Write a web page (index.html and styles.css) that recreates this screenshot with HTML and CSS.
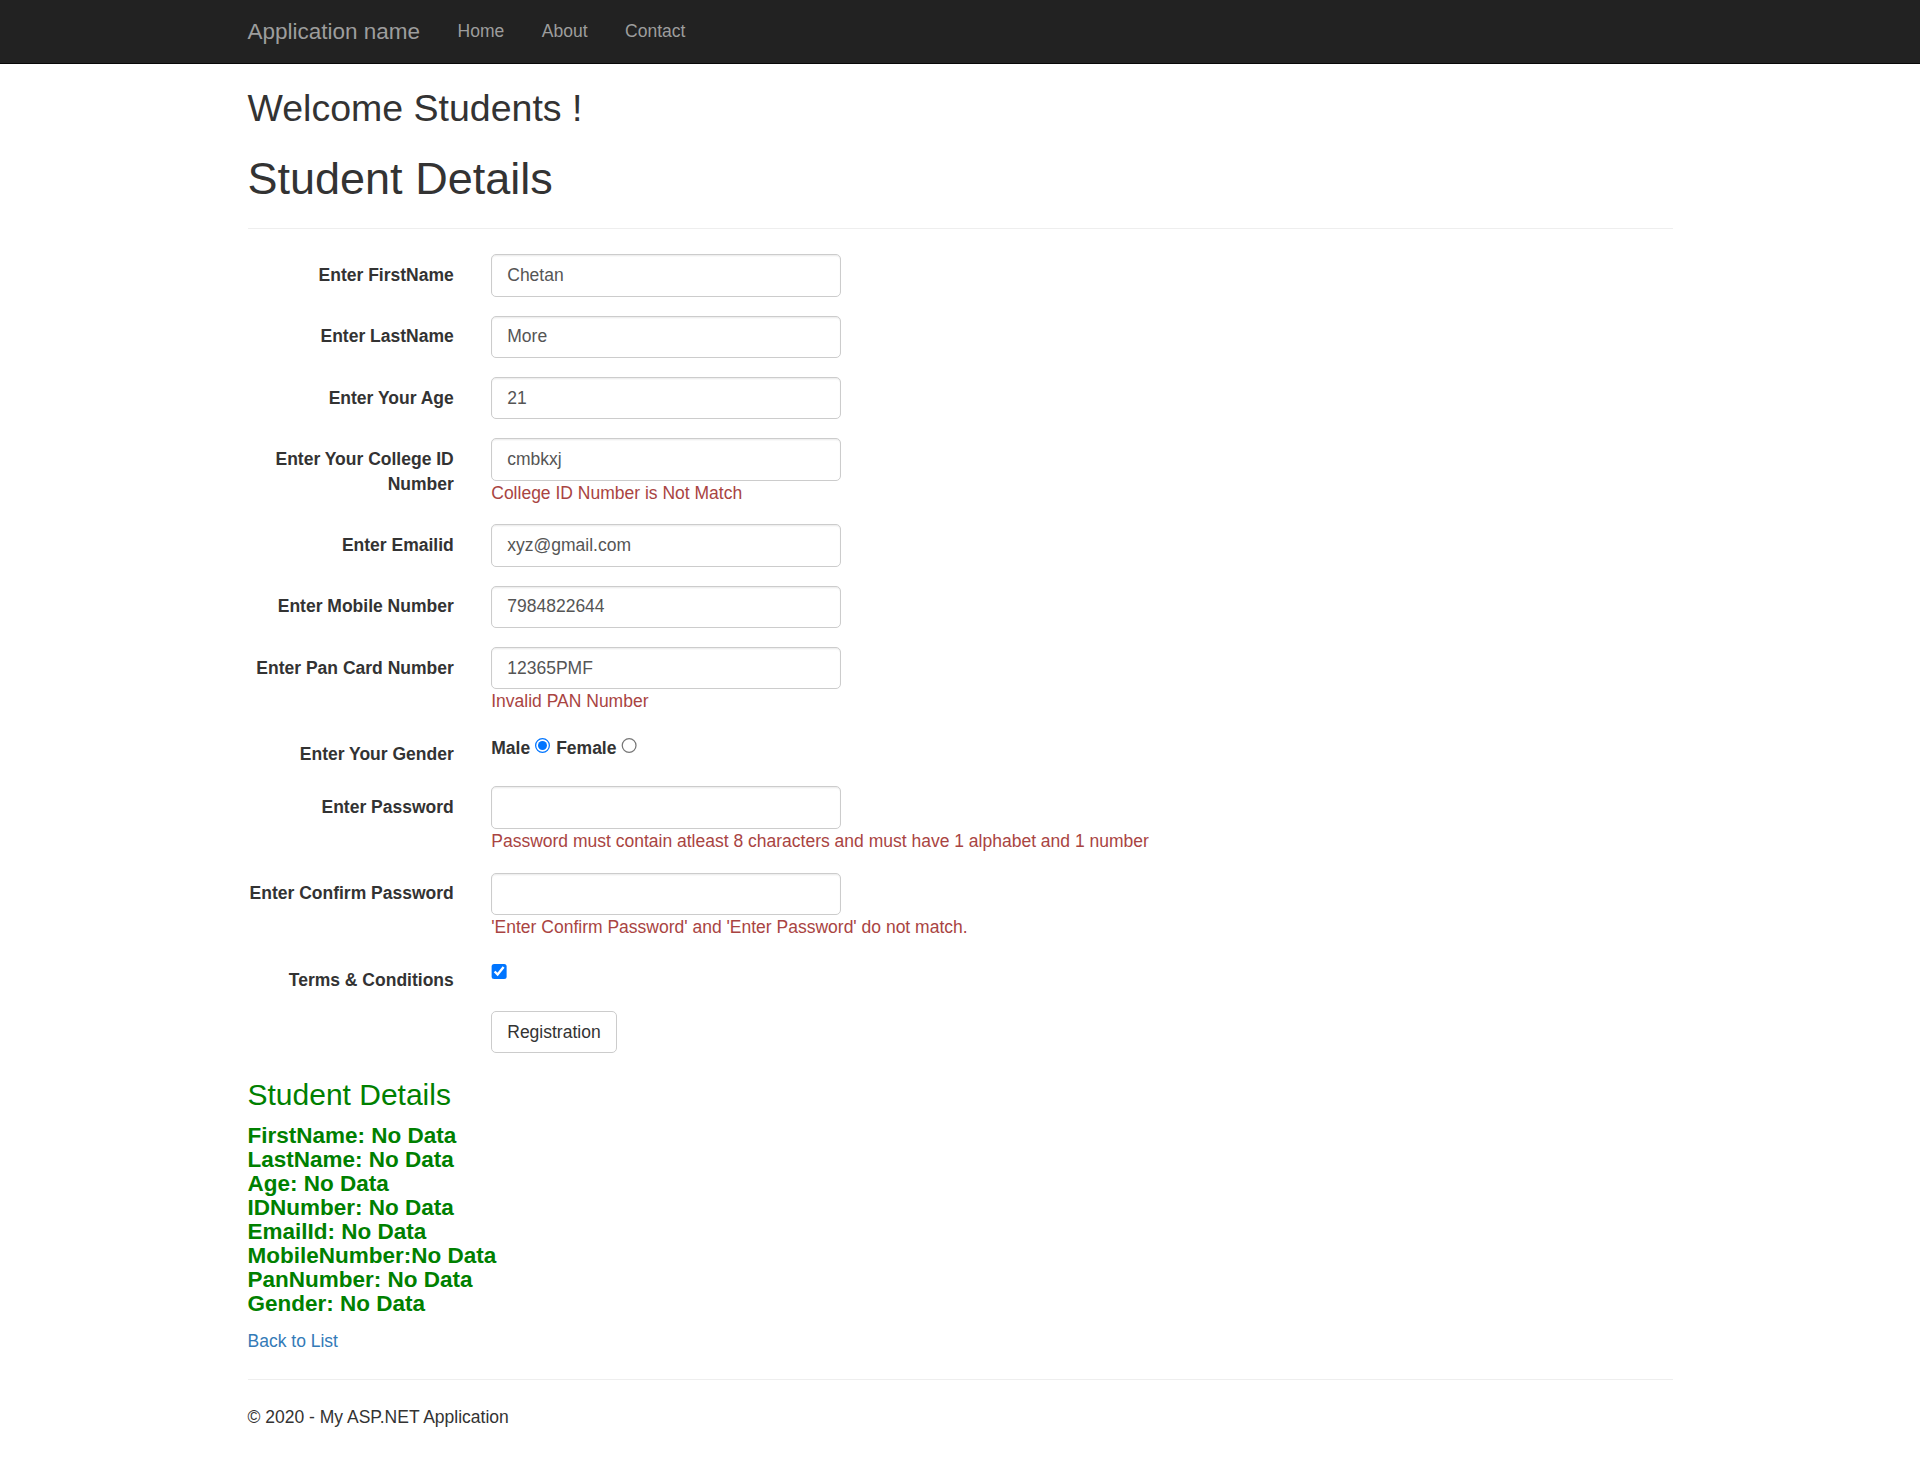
FILE: index.html
```html
<!DOCTYPE html>
<html lang="en">
<head>
<meta charset="utf-8">
<title>Student Details</title>
<link rel="stylesheet" href="styles.css">
</head>
<body>
<div class="navbar">
  <div class="container nav-inner">
    <a class="navbar-brand" href="#">Application name</a>
    <ul class="navbar-nav">
      <li><a href="#">Home</a></li>
      <li><a href="#">About</a></li>
      <li><a href="#">Contact</a></li>
    </ul>
  </div>
</div>
<div class="container body-content">
  <h2 class="welcome">Welcome Students !</h2>
  <div class="form-horizontal">
    <h1 class="page-title">Student Details</h1>
    <hr class="divider">
    <div class="form-group">
      <label class="control-label">Enter FirstName</label>
      <div class="field"><input class="form-control" type="text" value="Chetan"></div>
    </div>
    <div class="form-group">
      <label class="control-label">Enter LastName</label>
      <div class="field"><input class="form-control" type="text" value="More"></div>
    </div>
    <div class="form-group">
      <label class="control-label">Enter Your Age</label>
      <div class="field"><input class="form-control" type="text" value="21"></div>
    </div>
    <div class="form-group">
      <label class="control-label">Enter Your College ID Number</label>
      <div class="field"><input class="form-control" type="text" value="cmbkxj"><div class="text-danger">College ID Number is Not Match</div></div>
    </div>
    <div class="form-group">
      <label class="control-label">Enter Emailid</label>
      <div class="field"><input class="form-control" type="text" value="xyz@gmail.com"></div>
    </div>
    <div class="form-group">
      <label class="control-label">Enter Mobile Number</label>
      <div class="field"><input class="form-control" type="text" value="7984822644"></div>
    </div>
    <div class="form-group">
      <label class="control-label">Enter Pan Card Number</label>
      <div class="field"><input class="form-control" type="text" value="12365PMF"><div class="text-danger">Invalid PAN Number</div></div>
    </div>
    <div class="form-group">
      <label class="control-label">Enter Your Gender</label>
      <div class="field"><label class="inline-label">Male</label> <input class="choice" type="radio" name="gender" checked> <label class="inline-label">Female</label> <input class="choice" type="radio" name="gender"></div>
    </div>
    <div class="form-group">
      <label class="control-label">Enter Password</label>
      <div class="field"><input class="form-control" type="password" value=""><div class="text-danger">Password must contain atleast 8 characters and must have 1 alphabet and 1 number</div></div>
    </div>
    <div class="form-group">
      <label class="control-label">Enter Confirm Password</label>
      <div class="field"><input class="form-control" type="password" value=""><div class="text-danger">'Enter Confirm Password' and 'Enter Password' do not match.</div></div>
    </div>
    <div class="form-group">
      <label class="control-label">Terms &amp; Conditions</label>
      <div class="field"><input class="choice" type="checkbox" checked></div>
    </div>
    <div class="form-group">
      <div class="spacer"></div>
      <div class="field"><button class="btn" type="button">Registration</button></div>
    </div>
  </div>
  <h3 class="green-title">Student Details</h3>
  <h4 class="green-details">FirstName: No Data<br>LastName: No Data<br>Age: No Data<br>IDNumber: No Data<br>EmailId: No Data<br>MobileNumber:No Data<br>PanNumber: No Data<br>Gender: No Data</h4>
  <p class="back"><a href="#">Back to List</a></p>
  <hr class="divider">
  <footer class="footer"><p>&copy; 2020 - My ASP.NET Application</p></footer>
</div>
</body>
</html>
```

FILE: styles.css
```css
html {
  zoom: 1.25;
}
* {
  box-sizing: border-box;
}
body {
  margin: 0;
  padding-bottom: 20px;
  background: #fff;
  color: #333;
  font-family: "Liberation Sans", Arial, Helvetica, sans-serif;
  font-size: 14px;
  line-height: 1.42857143;
}
a {
  color: #337ab7;
  text-decoration: none;
}
.container {
  width: 1170px;
  margin: 0 auto;
  padding: 0 15px;
}
.navbar {
  background: #222;
  border-bottom: 1px solid #080808;
  height: 51px;
  margin-bottom: -1px;
  position: relative;
}
.nav-inner {
  display: flex;
  align-items: flex-start;
}
.navbar-brand {
  display: block;
  margin-left: -15px;
  padding: 15px;
  height: 50px;
  font-size: 18px;
  line-height: 20px;
  color: #9d9d9d;
}
.navbar-nav {
  display: flex;
  list-style: none;
  margin: 0;
  padding: 0;
}
.navbar-nav a {
  display: block;
  padding: 15px;
  line-height: 20px;
  color: #9d9d9d;
}
.welcome {
  font-size: 30px;
  font-weight: 500;
  line-height: 1.1;
  margin: 20px 0 10px;
}
.page-title {
  font-size: 36px;
  font-weight: 500;
  line-height: 1.1;
  margin: 20px 0 10px;
}
.divider {
  height: 0;
  margin: 20px 0;
  border: 0;
  border-top: 1px solid #eee;
}
.form-group {
  display: grid;
  grid-template-columns: 16.66666667% 83.33333333%;
  margin: 0 -15px 15px;
}
.control-label {
  padding: 7px 15px 0;
  text-align: right;
  font-weight: 700;
  margin: 0;
}
.spacer {
  min-height: 1px;
}
.field {
  padding: 0 15px;
  min-height: 1px;
}
.form-control {
  display: block;
  width: 100%;
  max-width: 280px;
  height: 34px;
  padding: 6px 12px;
  font-family: inherit;
  font-size: 14px;
  line-height: 1.42857143;
  color: #555;
  background: #fff;
  border: 1px solid #ccc;
  border-radius: 4px;
  box-shadow: inset 0 1px 1px rgba(0, 0, 0, .075);
  margin: 0;
}
.text-danger {
  color: #a94442;
}
.inline-label {
  display: inline-block;
  margin-bottom: 5px;
  font-weight: 700;
}
.choice {
  margin: 4px 0 0;
  line-height: normal;
}
.btn {
  display: inline-block;
  padding: 6px 12px;
  font-family: inherit;
  font-size: 14px;
  line-height: 1.42857143;
  color: #333;
  background: #fff;
  border: 1px solid #ccc;
  border-radius: 4px;
  margin: 0;
}
.green-title {
  color: green;
  font-size: 24px;
  font-weight: 500;
  line-height: 1.1;
  margin: 20px 0 10px;
}
.green-details {
  color: green;
  font-size: 18px;
  font-weight: 700;
  line-height: 19.25px;
  margin: 10px 0;
}
.back {
  margin: 0 0 10px;
}
.footer p {
  margin: 0 0 10px;
}
```
